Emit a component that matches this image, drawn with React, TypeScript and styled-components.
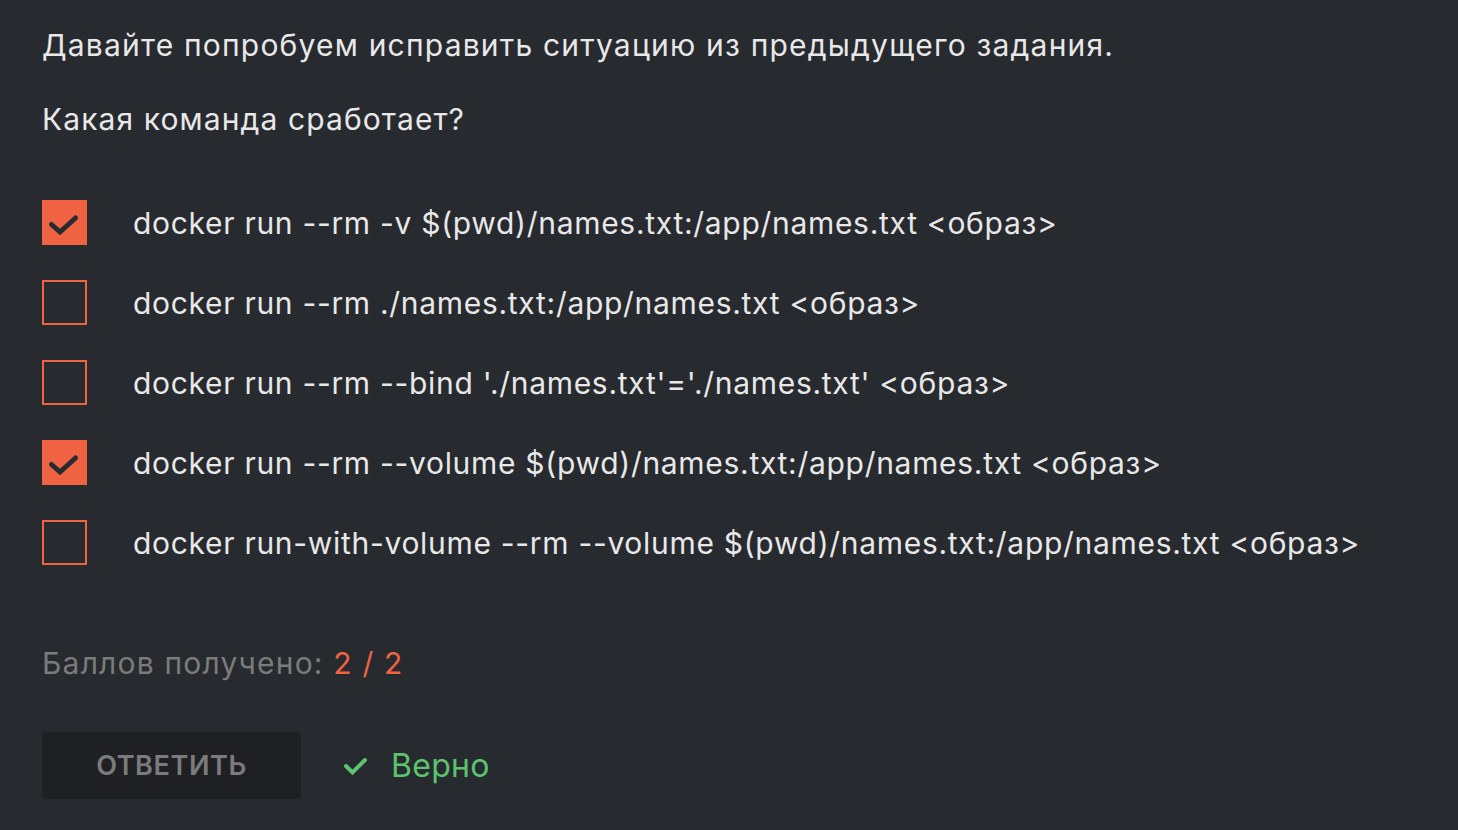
import styled, { createGlobalStyle } from "styled-components";

const GlobalStyle = createGlobalStyle`
  html, body {
    margin: 0;
    padding: 0;
    background: #272a2f;
  }
  body {
    font-family: Inter, "Noto Sans", "Liberation Sans", sans-serif;
    -webkit-font-smoothing: antialiased;
  }
`;

const options = [
  { text: "docker run --rm -v $(pwd)/names.txt:/app/names.txt <образ>", checked: true },
  { text: "docker run --rm ./names.txt:/app/names.txt <образ>", checked: false },
  { text: "docker run --rm --bind './names.txt'='./names.txt' <образ>", checked: false },
  { text: "docker run --rm --volume $(pwd)/names.txt:/app/names.txt <образ>", checked: true },
  { text: "docker run-with-volume --rm --volume $(pwd)/names.txt:/app/names.txt <образ>", checked: false },
];

export default function App() {
  return (
    <Page>
      <GlobalStyle />
      <Question $spacing={1.2}>Давайте попробуем исправить ситуацию из предыдущего задания.</Question>
      <Question $spacing={1.1}>Какая команда сработает?</Question>

      <OptionList>
        {options.map((el, idx) => (
          <OptionRow key={idx}>
            <CheckBox $checked={el.checked}>
              {el.checked && (
                <svg width="45" height="45" viewBox="0 0 45 45">
                  <path
                    d="M9.5 24.5 L18 32 L33.5 18"
                    fill="none"
                    stroke="#272a2f"
                    strokeWidth="5"
                    strokeLinecap="round"
                    strokeLinejoin="miter"
                  />
                </svg>
              )}
            </CheckBox>
            <OptionText>{el.text}</OptionText>
          </OptionRow>
        ))}
      </OptionList>

      <Score>
        Баллов получено: <ScoreValue>2 / 2</ScoreValue>
      </Score>

      <Footer>
        <AnswerBtn>ОТВЕТИТЬ</AnswerBtn>
        <Result>
          <svg width="26" height="22" viewBox="0 0 26 22">
            <path
              d="M3 11 L9.5 17.5 L22 5"
              fill="none"
              stroke="#5cc36e"
              strokeWidth="4"
              strokeLinecap="round"
              strokeLinejoin="miter"
            />
          </svg>
          Верно
        </Result>
      </Footer>
    </Page>
  );
}

const Page = styled.div`
  width: 1458px;
  height: 830px;
  box-sizing: border-box;
  padding: 23px 42px 0;
  background: #272a2f;
  display: flex;
  flex-direction: column;
`;

const Question = styled.div<{ $spacing: number }>`
  color: #e8e8e8;
  font-size: 30px;
  font-weight: 400;
  letter-spacing: ${({ $spacing }) => $spacing}px;
  line-height: 44px;
  margin-bottom: 30px;
  white-space: nowrap;
`;

const OptionList = styled.div`
  margin-top: 29px;
  display: flex;
  flex-direction: column;
  gap: 35px;
`;

const OptionRow = styled.div`
  display: flex;
  align-items: center;
  gap: 46px;
  height: 45px;
`;

const CheckBox = styled.div<{ $checked: boolean }>`
  width: 45px;
  height: 45px;
  box-sizing: border-box;
  flex-shrink: 0;
  border: ${({ $checked }) => ($checked ? "none" : "2px solid #ef6343")};
  background: ${({ $checked }) => ($checked ? "#ef6343" : "transparent")};

  svg {
    display: block;
  }
`;

const OptionText = styled.div`
  color: #e8e8e8;
  font-size: 30px;
  letter-spacing: 0.7px;
  white-space: nowrap;
`;

const Score = styled.div`
  margin-top: 78px;
  color: #7b7b7b;
  font-size: 30px;
  letter-spacing: 1.2px;
  line-height: 40px;
`;

const ScoreValue = styled.span`
  color: #ef6343;
`;

const Footer = styled.div`
  margin-top: 49px;
  display: flex;
  align-items: center;
  gap: 42px;
`;

const AnswerBtn = styled.button`
  width: 259px;
  height: 67px;
  border: none;
  border-radius: 4px;
  background: #1f2024;
  color: #7b7b7b;
  font-family: inherit;
  font-size: 27px;
  font-weight: 600;
  letter-spacing: 0.6px;
`;

const Result = styled.div`
  display: flex;
  align-items: center;
  gap: 22px;
  color: #5cc36e;
  font-size: 32px;
  letter-spacing: 0.3px;
`;
